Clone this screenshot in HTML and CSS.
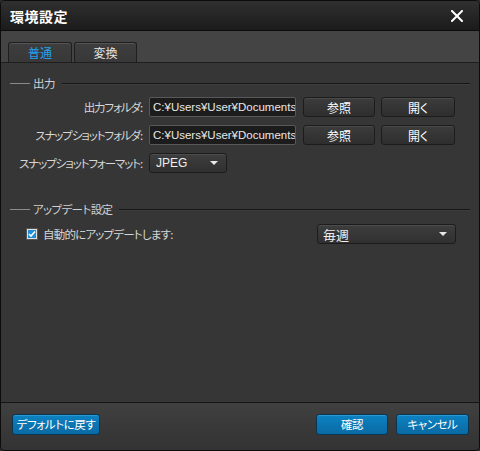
FILE: index.html
```html
<!DOCTYPE html>
<html lang="ja">
<head>
<meta charset="utf-8">
<link rel="stylesheet" href="styles.css">
</head>
<body>
<div class="window">
  <div class="titlebar">
    <span class="title">環境設定</span>
    <svg class="close" width="12" height="12" viewBox="0 0 12 12"><path d="M1 1 L11 11 M11 1 L1 11" stroke="#fff" stroke-width="2" stroke-linecap="square"/></svg>
  </div>
  <div class="tabstrip">
    <div class="tab active">普通</div>
    <div class="tab">変換</div>
  </div>
  <div class="content">
    <div class="group-head"><span class="lead"></span><span class="gtitle">出力</span><span class="rule"></span></div>
    <div class="grid">
      <div class="label">出力フォルダ:</div>
      <div class="input">C:¥Users¥User¥Documents¥</div>
      <div class="btn">参照</div>
      <div class="btn">開く</div>
      <div class="label">スナップショットフォルダ:</div>
      <div class="input">C:¥Users¥User¥Documents¥</div>
      <div class="btn">参照</div>
      <div class="btn">開く</div>
      <div class="label">スナップショットフォーマット:</div>
      <div class="select small"><span>JPEG</span><i class="arrow"></i></div>
    </div>
    <div class="group-head second"><span class="lead"></span><span class="gtitle">アップデート設定</span><span class="rule"></span></div>
    <div class="update-row">
      <label class="check"><span class="box"><svg width="8" height="8" viewBox="0 0 8 8"><path d="M1 4 L3 6 L7 1.5" stroke="#fff" stroke-width="1.6" fill="none"/></svg></span>自動的にアップデートします:</label>
      <div class="select wide"><span>毎週</span><i class="arrow"></i></div>
    </div>
  </div>
  <div class="footer">
    <div class="bbtn default">デフォルトに戻す</div>
    <div class="spacer"></div>
    <div class="bbtn ok">確認</div>
    <div class="bbtn cancel">キャンセル</div>
  </div>
</div>
</body>
</html>
```
FILE: styles.css
```css
html, body { margin: 0; padding: 0; background: #2a2a2a; }
body { width: 480px; height: 451px; overflow: hidden; font-family: "Noto Sans CJK JP", "Liberation Sans", sans-serif; font-feature-settings: "palt"; }
.window {
  width: 480px; height: 451px; box-sizing: border-box;
  border: 1px solid #0c0c0c; border-radius: 5px; overflow: hidden;
  display: flex; flex-direction: column; background: #363636;
}
.titlebar {
  height: 29px; flex: none; display: flex; align-items: center; justify-content: space-between;
  padding: 0 16px 0 9px;
  background: linear-gradient(#303030, #1b1b1b);
  border-bottom: 1px solid #0c0c0c;
}
.title { color: #fff; font-weight: bold; font-size: 14px; letter-spacing: 0.5px; }
.close { display: block; }
.tabstrip {
  height: 31px; flex: none; background: #444; display: flex; align-items: flex-end;
  padding-left: 7px; gap: 2px; border-bottom: 1px solid #1e1e1e;
}
.tab {
  height: 20px; box-sizing: border-box; border: 1px solid #1e1e1e; border-bottom: none;
  border-radius: 3px 3px 0 0; background: linear-gradient(#3e3e3e, #383838);
  box-shadow: inset 0 1px 0 #555;
  color: #e6e6e6; font-size: 12px; display: flex; align-items: center; justify-content: center;
  width: 64px;
}
.tab + .tab { width: 63px; }
.tab.active { color: #23a3ec; }
.content { flex: 1; padding: 13px 9px 0 9px; }
.group-head { display: flex; align-items: center; height: 14px; color: #d0d0d0; font-size: 11.5px; letter-spacing: -0.6px; }
.group-head .lead { width: 20px; height: 1px; background: #8a8a8a; flex: none; }
.group-head .gtitle { padding: 0 7px 0 3px; line-height: 14px; }
.group-head .rule { flex: 1; height: 1px; background: #161616; box-shadow: 0 1px 0 #3e3e3e; }
.group-head.second { margin-top: 29px; }
.grid {
  display: grid; grid-template-columns: 133px 147px 73px 74px; column-gap: 6px; row-gap: 8px;
  margin-top: 7px; align-items: center;
}
.grid > div:nth-child(4n+3) { margin-left: 1px; }
.label { text-align: right; color: #d6d6d6; font-size: 11.5px; letter-spacing: -1.1px; white-space: nowrap; padding-right: 1px; }
.input {
  height: 20px; box-sizing: border-box; background: #1c1c1c; border: 1px solid #585858; border-radius: 2px;
  color: #e8e8e8; font-family: "Liberation Sans", sans-serif; font-size: 11.5px; line-height: 18px;
  padding-left: 3px; white-space: nowrap; overflow: hidden;
}
.btn {
  height: 20px; box-sizing: border-box; border: 1px solid #1c1c1c; border-radius: 3px;
  background: linear-gradient(#3c3c3c, #2e2e2e); box-shadow: inset 0 1px 0 #4a4a4a;
  color: #fff; font-size: 12px; display: flex; align-items: center; justify-content: center;
}
.select {
  height: 20px; box-sizing: border-box; border: 1px solid #1c1c1c; border-radius: 3px;
  background: linear-gradient(#3e3e3e, #303030); box-shadow: inset 0 1px 0 #4c4c4c;
  color: #eee; display: flex; align-items: center; justify-content: space-between;
  padding: 0 8px 0 6px;
}
.select.small { width: 78px; font-family: "Liberation Sans", sans-serif; font-size: 12px; }
.select.wide { width: 139px; font-size: 13px; padding-left: 5px; }
.arrow { width: 0; height: 0; border-left: 4px solid transparent; border-right: 4px solid transparent; border-top: 4px solid #e8e8e8; }
.update-row { display: flex; align-items: center; justify-content: space-between; margin-top: 8px; padding-left: 17px; padding-right: 14px; }
.check { display: flex; align-items: center; color: #d6d6d6; font-size: 11.5px; letter-spacing: -0.8px; gap: 6px; }
.box {
  width: 10px; height: 10px; box-sizing: border-box; border: 1px solid #e0e0e0; background: #1e8fd6;
  display: flex; align-items: center; justify-content: center; outline: 1px solid #555;
}
.box svg { display: block; }
.footer {
  height: 48px; flex: none; border-top: 1px solid #161616; box-sizing: border-box;
  background: linear-gradient(#404040, #333); display: flex; align-items: center; padding: 0 10px 5px 11px; gap: 8px;
}
.spacer { flex: 1; }
.bbtn {
  height: 21px; box-sizing: border-box; border: 1px solid #0a3550; border-radius: 3px;
  background: linear-gradient(#0c82c2, #0a6aa4); box-shadow: inset 0 1px 0 #2a9ad6;
  color: #fff; font-size: 11.5px; letter-spacing: -0.4px; display: flex; align-items: center; justify-content: center;
}
.bbtn.default { width: 88px; }
.bbtn.ok { width: 72px; }
.bbtn.cancel { width: 73px; }
```
